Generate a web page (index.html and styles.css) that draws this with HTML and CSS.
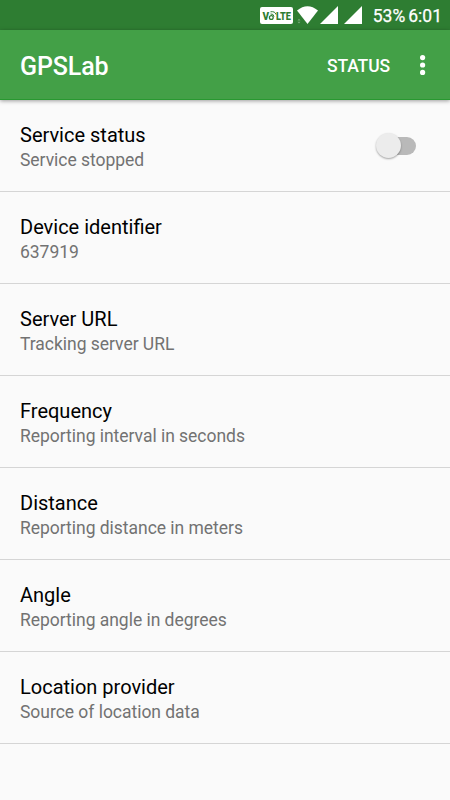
FILE: index.html
```html
<!DOCTYPE html>
<html lang="en">
<head>
<meta charset="utf-8">
<title>GPSLab</title>
<link rel="stylesheet" href="styles.css">
</head>
<body>
<header class="status-bar">
  <svg class="volte" width="33" height="17" viewBox="0 0 33 17">
    <rect width="33" height="17" rx="2" fill="#fff"/>
    <text class="volte-text" x="2.500" y="12.500" textLength="7">V</text>
    <text class="volte-text" x="16" y="12.500" textLength="15" lengthAdjust="spacingAndGlyphs">LTE</text>
    <g fill="none" stroke="#2e7d32"><circle cx="11.300" cy="10.500" r="1.900" stroke-width="1.300"/><path d="M10.500 7Q13.500 6.500 14 9.500M10.500 4.800Q15 4 16 7.500" stroke-width="1"/></g>
  </svg>
  <svg class="wifi" width="24" height="18" viewBox="0 0 24 18"><path d="M2 4.500Q12.500 -4 23 4.500L12.500 18Z" fill="#fff"/><path d="M2.500 14.500L4 12.800L5.500 14.500ZM2.500 15.700L4 17.400L5.500 15.700Z" fill="#77aa79"/></svg>
  <svg class="signal" width="18" height="18" viewBox="0 0 18 18"><path d="M18 0V18H0Z" fill="#fff"/></svg>
  <svg class="signal signal-last" width="18" height="18" viewBox="0 0 18 18"><path d="M18 0V18H0Z" fill="#fff"/></svg>
  <span class="battery">53%</span>
  <span class="clock">6:01</span>
</header>
<nav class="toolbar">
  <h1 class="app-title">GPSLab</h1>
  <span class="action">STATUS</span>
  <svg class="more" width="6" height="20" viewBox="0 0 6 20" fill="#fff"><circle cx="2.600" cy="2.600" r="2.600"/><circle cx="2.600" cy="10" r="2.600"/><circle cx="2.600" cy="17.400" r="2.600"/></svg>
</nav>
<main class="settings">
  <section class="row"><div class="label"><h2>Service status</h2><p>Service stopped</p></div><span class="switch"><span class="thumb"></span></span></section>
  <section class="row"><div class="label"><h2>Device identifier</h2><p>637919</p></div></section>
  <section class="row"><div class="label"><h2>Server URL</h2><p>Tracking server URL</p></div></section>
  <section class="row"><div class="label"><h2>Frequency</h2><p>Reporting interval in seconds</p></div></section>
  <section class="row"><div class="label"><h2>Distance</h2><p>Reporting distance in meters</p></div></section>
  <section class="row"><div class="label"><h2>Angle</h2><p>Reporting angle in degrees</p></div></section>
  <section class="row"><div class="label"><h2>Location provider</h2><p>Source of location data</p></div></section>
</main>
</body>
</html>
```

FILE: styles.css
```css
* { box-sizing: border-box; }
body { margin: 0; height: 800px; overflow: hidden; background: #fafafa; font-family: Roboto, sans-serif; }
h1, h2, p { margin: 0; font-weight: 400; }
.status-bar { display: flex; align-items: center; height: 30px; padding-right: 8px; justify-content: flex-end; background: #2e7d32; color: #fff; font-size: 17.5px; line-height: 20px; }
.volte { margin-top: 1px; }
.volte-text { font: 900 10px Roboto, sans-serif; fill: #2e7d32; }
.wifi { margin-left: 2px; }
.signal { margin-left: 1px; }
.signal-last { margin-left: 6px; }
.battery { margin-left: 11px; padding-top: 2px; -webkit-text-stroke: .25px #fff; }
.clock { margin-left: 3px; padding-top: 2px; -webkit-text-stroke: .25px #fff; }
.toolbar { position: relative; display: flex; align-items: center; height: 70px; padding: 1px 24px 0 20px; background: #43a047; color: #fff; border-bottom: 1px solid #289830; box-shadow: 0 1px 4px rgba(0,0,0,.38); }
.app-title { flex: 1; padding-top: 3px; font-size: 25px; font-weight: 500; letter-spacing: -.1px; }
.action { padding-top: 1px; font-size: 17.5px; font-weight: 500; letter-spacing: -.1px; margin-right: 30px; }
.row { display: flex; align-items: center; height: 92px; padding: 0 34px 0 20px; border-bottom: 1px solid #d5d5d5; }
.label { flex: 1; padding-top: 4px; }
.label h2 { font-size: 20px; line-height: 26px; color: #000; }
.label p { font-size: 17.5px; line-height: 25px; color: #727272; letter-spacing: -.03px; }
.switch { display: flex; align-items: center; width: 36px; height: 18px; border-radius: 9px; background: #b9b9b9; }
.thumb { flex: none; width: 25px; height: 25px; margin-left: -4px; border-radius: 50%; background: #ececec; box-shadow: 0 1px 2px rgba(0,0,0,.35); }
```
